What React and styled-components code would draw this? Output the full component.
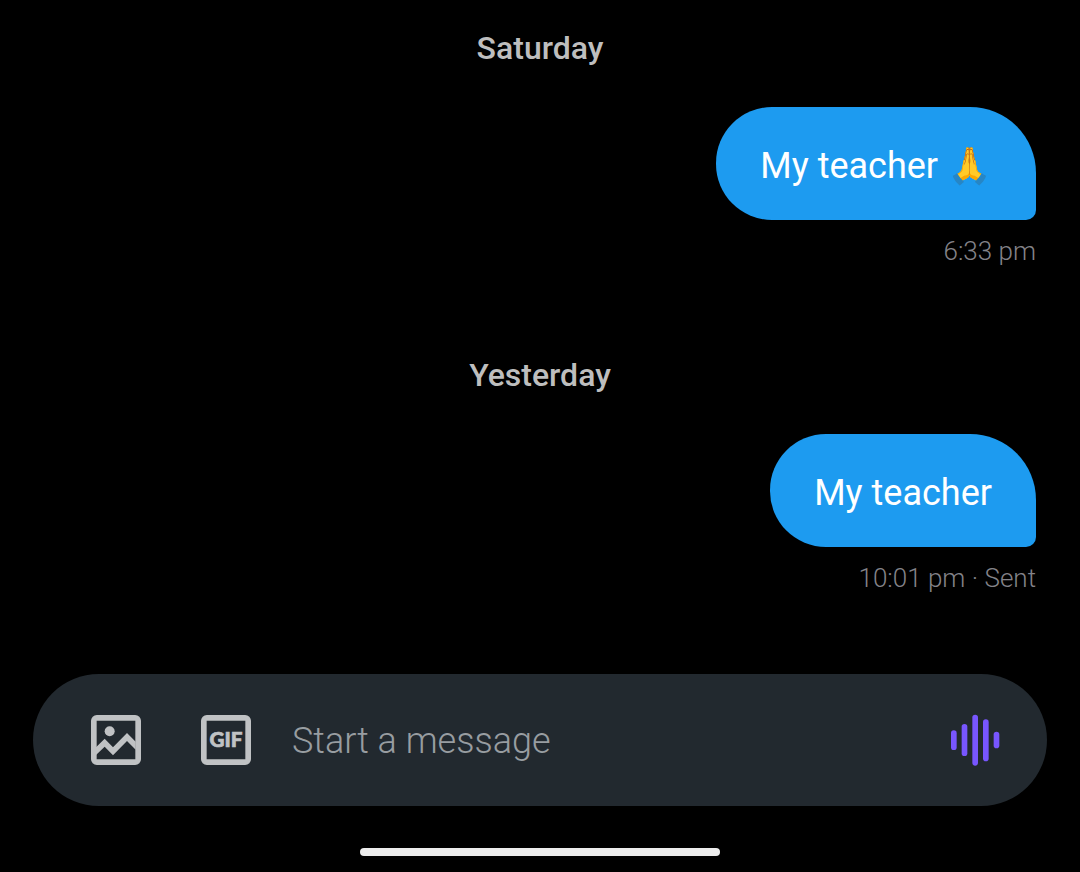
import React, { useState } from 'react';
import styled, { createGlobalStyle } from 'styled-components';

const GlobalStyle = createGlobalStyle`
  * {
    box-sizing: border-box;
  }

  body {
    margin: 0;
    background: #000000;
    font-family: Roboto, 'Liberation Sans', sans-serif;
  }
`;

const Screen = styled.main`
  display: flex;
  flex-direction: column;
  min-height: 100vh;
  padding-bottom: 16px;
`;

const Conversation = styled.div`
  display: flex;
  flex: 1;
  flex-direction: column;
  gap: 88px;
  padding: 28px 44px 40px;
`;

const Day = styled.section`
  display: flex;
  flex-direction: column;
  align-items: flex-end;
`;

const DayTitle = styled.h2`
  align-self: center;
  margin: 0 0 39px;
  font-size: 32px;
  font-weight: 500;
  line-height: 40px;
  color: #bebebe;
`;

const Bubble = styled.p`
  margin: 0;
  padding: 39px 44px 34px;
  border-radius: 56px 66px 10px 56px;
  background: #1d9bf0;
  color: #ffffff;
  font-size: 36px;
  line-height: 40px;
`;

const Meta = styled.p`
  margin: 15px 0 0;
  font-size: 26px;
  font-weight: 300;
  line-height: 32px;
  color: #848389;
`;

const Composer = styled.form`
  display: flex;
  align-items: center;
  height: 132px;
  margin: 0 33px;
  padding: 0 47px 0 58px;
  border-radius: 66px;
  background: #22292f;
`;

const IconButton = styled.button`
  display: flex;
  flex: none;
  margin: 0 ${(props) => props.$gap || 0}px 0 0;
  padding: 0;
  border: none;
  background: none;
  color: ${(props) => props.$color || '#c0c2c4'};
  cursor: pointer;
`;

const MessageInput = styled.input`
  flex: 1;
  min-width: 0;
  padding: 2px 0 0;
  border: none;
  outline: none;
  background: none;
  color: #ffffff;
  font-family: inherit;
  font-size: 36px;
  font-weight: 300;
  line-height: 44px;

  &::placeholder {
    color: #989da1;
    opacity: 1;
  }
`;

const HomeBar = styled.div`
  width: 33.3%;
  height: 8px;
  margin: 42px auto 0;
  border-radius: 4px;
  background: #ececec;
`;

const PhotoIcon = () => (
  <svg width="50" height="50" viewBox="0 0 150 150" fill="currentColor" aria-hidden="true">
    <rect x="8.5" y="8.5" width="133" height="133" rx="9" fill="none" stroke="currentColor" strokeWidth="17" />
    <circle cx="56" cy="48.5" r="15" />
    <path d="M15 97 41 71 66 97 108 54 134 80V104L108 78 66 121 41 95 15 120Z" />
  </svg>
);

const GifIcon = () => (
  <svg width="50" height="50" viewBox="0 0 150 150" fill="currentColor" aria-hidden="true">
    <rect x="8.5" y="8.5" width="133" height="133" rx="9" fill="none" stroke="currentColor" strokeWidth="17" />
    <text
      x="75"
      y="97"
      textAnchor="middle"
      fontFamily="Lato, sans-serif"
      fontSize="62"
      fontWeight="900"
      stroke="currentColor"
      strokeWidth="2"
    >
      GIF
    </text>
  </svg>
);

const VoiceIcon = () => (
  <svg width="50" height="52" viewBox="0 0 150 156" fill="currentColor" aria-hidden="true">
    <rect x="3" y="49" width="17" height="59" rx="8.5" />
    <rect x="35" y="30" width="17" height="96" rx="8.5" />
    <rect x="67" y="2" width="17" height="153" rx="8.5" />
    <rect x="99" y="16" width="17" height="126" rx="8.5" />
    <rect x="131" y="53" width="17" height="50" rx="8.5" />
  </svg>
);

const days = [
  { id: 1, title: 'Saturday', text: 'My teacher 🙏', meta: '6:33 pm' },
  { id: 2, title: 'Yesterday', text: 'My teacher', meta: '10:01 pm · Sent' },
];

const App = () => {
  const [message, setMessage] = useState('');

  return (
    <>
      <GlobalStyle />
      <Screen>
        <Conversation>
          {days.map((day) => (
            <Day key={day.id}>
              <DayTitle>{day.title}</DayTitle>
              <Bubble>{day.text}</Bubble>
              <Meta>{day.meta}</Meta>
            </Day>
          ))}
        </Conversation>
        <Composer onSubmit={(e) => e.preventDefault()}>
          <IconButton type="button" aria-label="Add photo" $gap={60}>
            <PhotoIcon />
          </IconButton>
          <IconButton type="button" aria-label="Add GIF" $gap={41}>
            <GifIcon />
          </IconButton>
          <MessageInput
            aria-label="Start a message"
            placeholder="Start a message"
            value={message}
            onChange={(e) => setMessage(e.target.value)}
          />
          <IconButton type="button" aria-label="Record voice message" $color="#7856ff">
            <VoiceIcon />
          </IconButton>
        </Composer>
        <HomeBar />
      </Screen>
    </>
  );
};

export default App;
